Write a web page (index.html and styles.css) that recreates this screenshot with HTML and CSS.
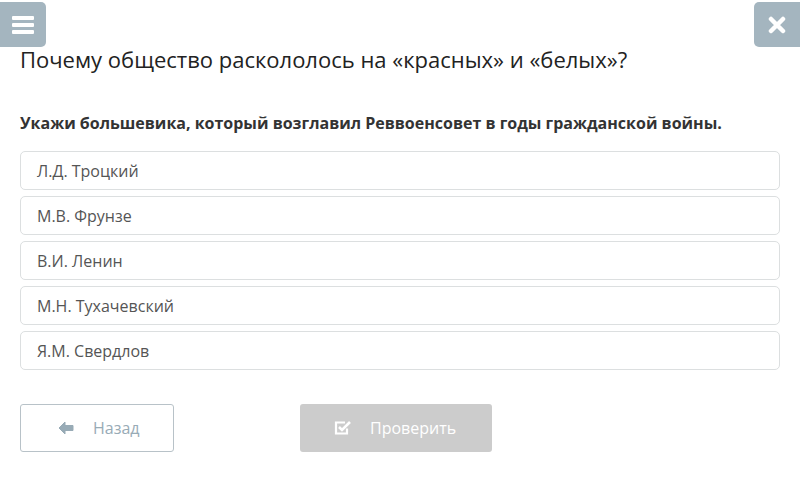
FILE: index.html
```html
<!DOCTYPE html>
<html lang="ru">
<head>
<meta charset="utf-8">
<link rel="stylesheet" href="styles.css">
</head>
<body>
<div class="page">
  <button class="corner corner-left" aria-label="menu">
    <svg width="22" height="18" viewBox="0 0 22 18"><rect x="0" y="0" width="22" height="4" rx="1" fill="#fff"/><rect x="0" y="7" width="22" height="4" rx="1" fill="#fff"/><rect x="0" y="14" width="22" height="4" rx="1" fill="#fff"/></svg>
  </button>
  <button class="corner corner-right" aria-label="close">
    <svg width="18" height="18" viewBox="0 0 18 18"><path d="M3 3 L15 15 M15 3 L3 15" stroke="#fff" stroke-width="4.5" stroke-linecap="round"/></svg>
  </button>
  <h1 class="title">Почему общество раскололось на «красных» и «белых»?</h1>
  <p class="question">Укажи большевика, который возглавил Реввоенсовет в годы гражданской войны.</p>
  <div class="options">
    <div class="option">Л.Д. Троцкий</div>
    <div class="option">М.В. Фрунзе</div>
    <div class="option">В.И. Ленин</div>
    <div class="option">М.Н. Тухачевский</div>
    <div class="option">Я.М. Свердлов</div>
  </div>
  <div class="actions">
    <button class="btn btn-back">
      <svg width="16" height="14" viewBox="0 0 16 14"><path d="M7 1 L1 7 L7 13 L7 9.5 L15 9.5 L15 4.5 L7 4.5 Z" fill="#98abb6" stroke="#98abb6" stroke-width="1" stroke-linejoin="round"/></svg>
      <span>Назад</span>
    </button>
    <button class="btn btn-check">
      <svg width="18" height="16" viewBox="0 0 18 16"><path d="M13 8.5 V13.5 H2 V2.5 H11" fill="none" stroke="#fff" stroke-width="2.2"/><path d="M5 7 L8 10 L16 2" fill="none" stroke="#fff" stroke-width="2.6"/></svg>
      <span>Проверить</span>
    </button>
  </div>
</div>
</body>
</html>
```
FILE: styles.css
```css
* { box-sizing: border-box; }
html, body { margin: 0; padding: 0; background: #fff; }
body { font-family: "Open Sans", "Noto Sans", sans-serif; color: #333; width: 800px; height: 487px; overflow: hidden; }
.page { position: relative; padding: 0 20px; }
.corner {
  position: absolute; top: 2px; width: 46px; height: 45px; border: none;
  background: #a4b5bf; display: flex; align-items: center; justify-content: center; padding: 0;
}
.corner-left { left: 0; border-radius: 0 5px 5px 0; }
.corner-right { right: 0; border-radius: 5px 0 0 5px; }
.title { margin: 0; padding-top: 44px; font-size: 22px; font-weight: 400; line-height: 30px; color: #222; }
.question { margin: 38px 0 0; font-size: 16px; font-weight: 700; line-height: 22px; color: #333; }
.options { margin-top: 17px; display: flex; flex-direction: column; gap: 6px; }
.option {
  height: 39px; border: 1px solid #dcdfe0; border-radius: 5px; padding: 0 16px;
  display: flex; align-items: center; font-size: 16px; color: #555;
}
.actions { margin-top: 34px; display: flex; gap: 126px; }
.btn { height: 48px; border-radius: 3px; font-family: inherit; font-size: 16px; display: flex; align-items: center; padding: 0; }
.btn-back { width: 154px; background: #fff; border: 1px solid #b8c2c8; color: #98abb6; padding-left: 37px; gap: 19px; }
.btn-check { width: 192px; background: #cccccc; border: none; color: #fff; padding-left: 34px; gap: 18px; }
```
